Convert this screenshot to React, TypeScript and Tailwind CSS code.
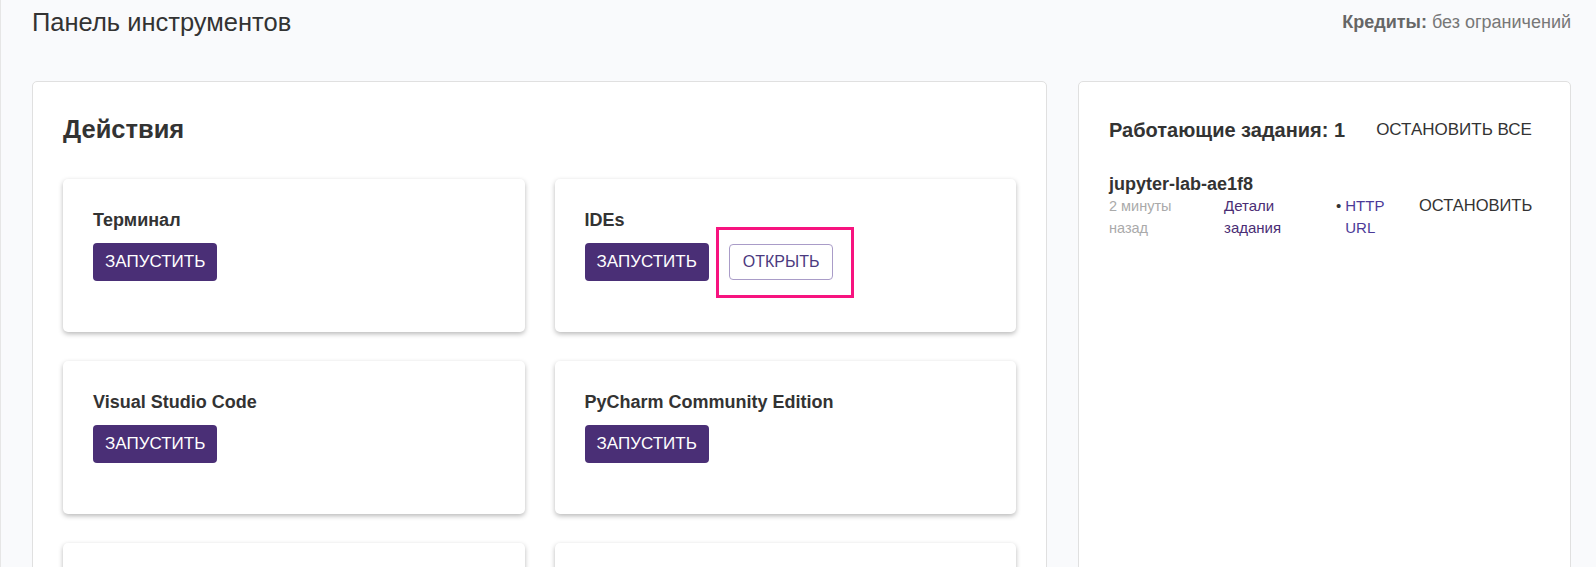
const font = { fontFamily: '"Liberation Sans", Arial, sans-serif' }

function ToolCard({ title, open, empty }: { title?: string; open?: boolean; empty?: boolean }) {
  return (
    <div className="relative h-[153px] rounded-[5px] bg-white px-[30px] pt-[29px] shadow-[0_2px_5px_rgba(0,0,0,0.28)]">
      {!empty && (
        <>
          <h3 className="text-[18px] leading-[24px] font-bold text-[#333]">{title}</h3>
          <div className="mt-[11px] flex items-center gap-[20px]">
            <button className="h-[38px] rounded-[4px] bg-[#4a2f76] px-[12px] text-[17px] text-white uppercase">
              Запустить
            </button>
            {open && (
              <button className="h-[36px] rounded-[4px] border border-[#a99cc8] bg-white px-[13px] text-[16px] text-[#4b3a80] uppercase">
                Открыть
              </button>
            )}
          </div>
        </>
      )}
      {open && (
        <div className="pointer-events-none absolute top-[48px] left-[161px] h-[71px] w-[138px] border-[3px] border-[#f7137f]" />
      )}
    </div>
  )
}

export default function App() {
  return (
    <div
      style={font}
      className="h-screen overflow-hidden border-l border-[#e6e6e6] bg-[#f9fafc] pr-[25px] pl-[31px]"
    >
      <header className="flex h-[45px] items-center justify-between">
        <h1 className="text-[25.5px] text-[#333]">Панель инструментов</h1>
        <p className="text-[18px] text-[#777]">
          <span className="font-bold text-[#666]">Кредиты:</span> без ограничений
        </p>
      </header>

      <div className="mt-[36px] flex gap-[31px]">
        <section className="h-[520px] w-[1015px] rounded-[5px] border border-[#e0e0e0] bg-white px-[30px] pt-[33px]">
          <h2 className="text-[25.5px] leading-[28px] font-bold text-[#333]">Действия</h2>
          <div className="mt-[36px] grid grid-cols-2 gap-x-[30px] gap-y-[29px]">
            <ToolCard title="Терминал" />
            <ToolCard title="IDEs" open />
            <ToolCard title="Visual Studio Code" />
            <ToolCard title="PyCharm Community Edition" />
            <ToolCard empty />
            <ToolCard empty />
          </div>
        </section>

        <section className="h-[520px] flex-1 rounded-[5px] border border-[#e0e0e0] bg-white pr-[30px] pl-[30px] pt-[35px]">
          <div className="flex items-center">
            <h2 className="text-[20px] leading-[24px] font-bold text-[#333]">Работающие задания: 1</h2>
            <button className="ml-[31px] text-[17px] text-[#333] uppercase">Остановить все</button>
          </div>

          <div className="mt-[30px]">
            <div className="text-[18px] leading-[22px] font-bold text-[#333]">jupyter-lab-ae1f8</div>
            <div className="grid grid-cols-[115px_112px_83px_auto] text-[14.5px] leading-[22px]">
              <div className="w-[90px] text-[#aaa]">2 минуты назад</div>
              <div className="w-[95px] text-[15px] text-[#4a2d74]">Детали задания</div>
              <div className="flex gap-[4px] text-[15px] text-[#4b3a98]">
                <span className="text-[#333]">•</span>
                <span className="w-[45px]">HTTP URL</span>
              </div>
              <button className="self-start text-left text-[16.5px] leading-[20px] text-[#333] uppercase">
                Остановить
              </button>
            </div>
          </div>
        </section>
      </div>
    </div>
  )
}
